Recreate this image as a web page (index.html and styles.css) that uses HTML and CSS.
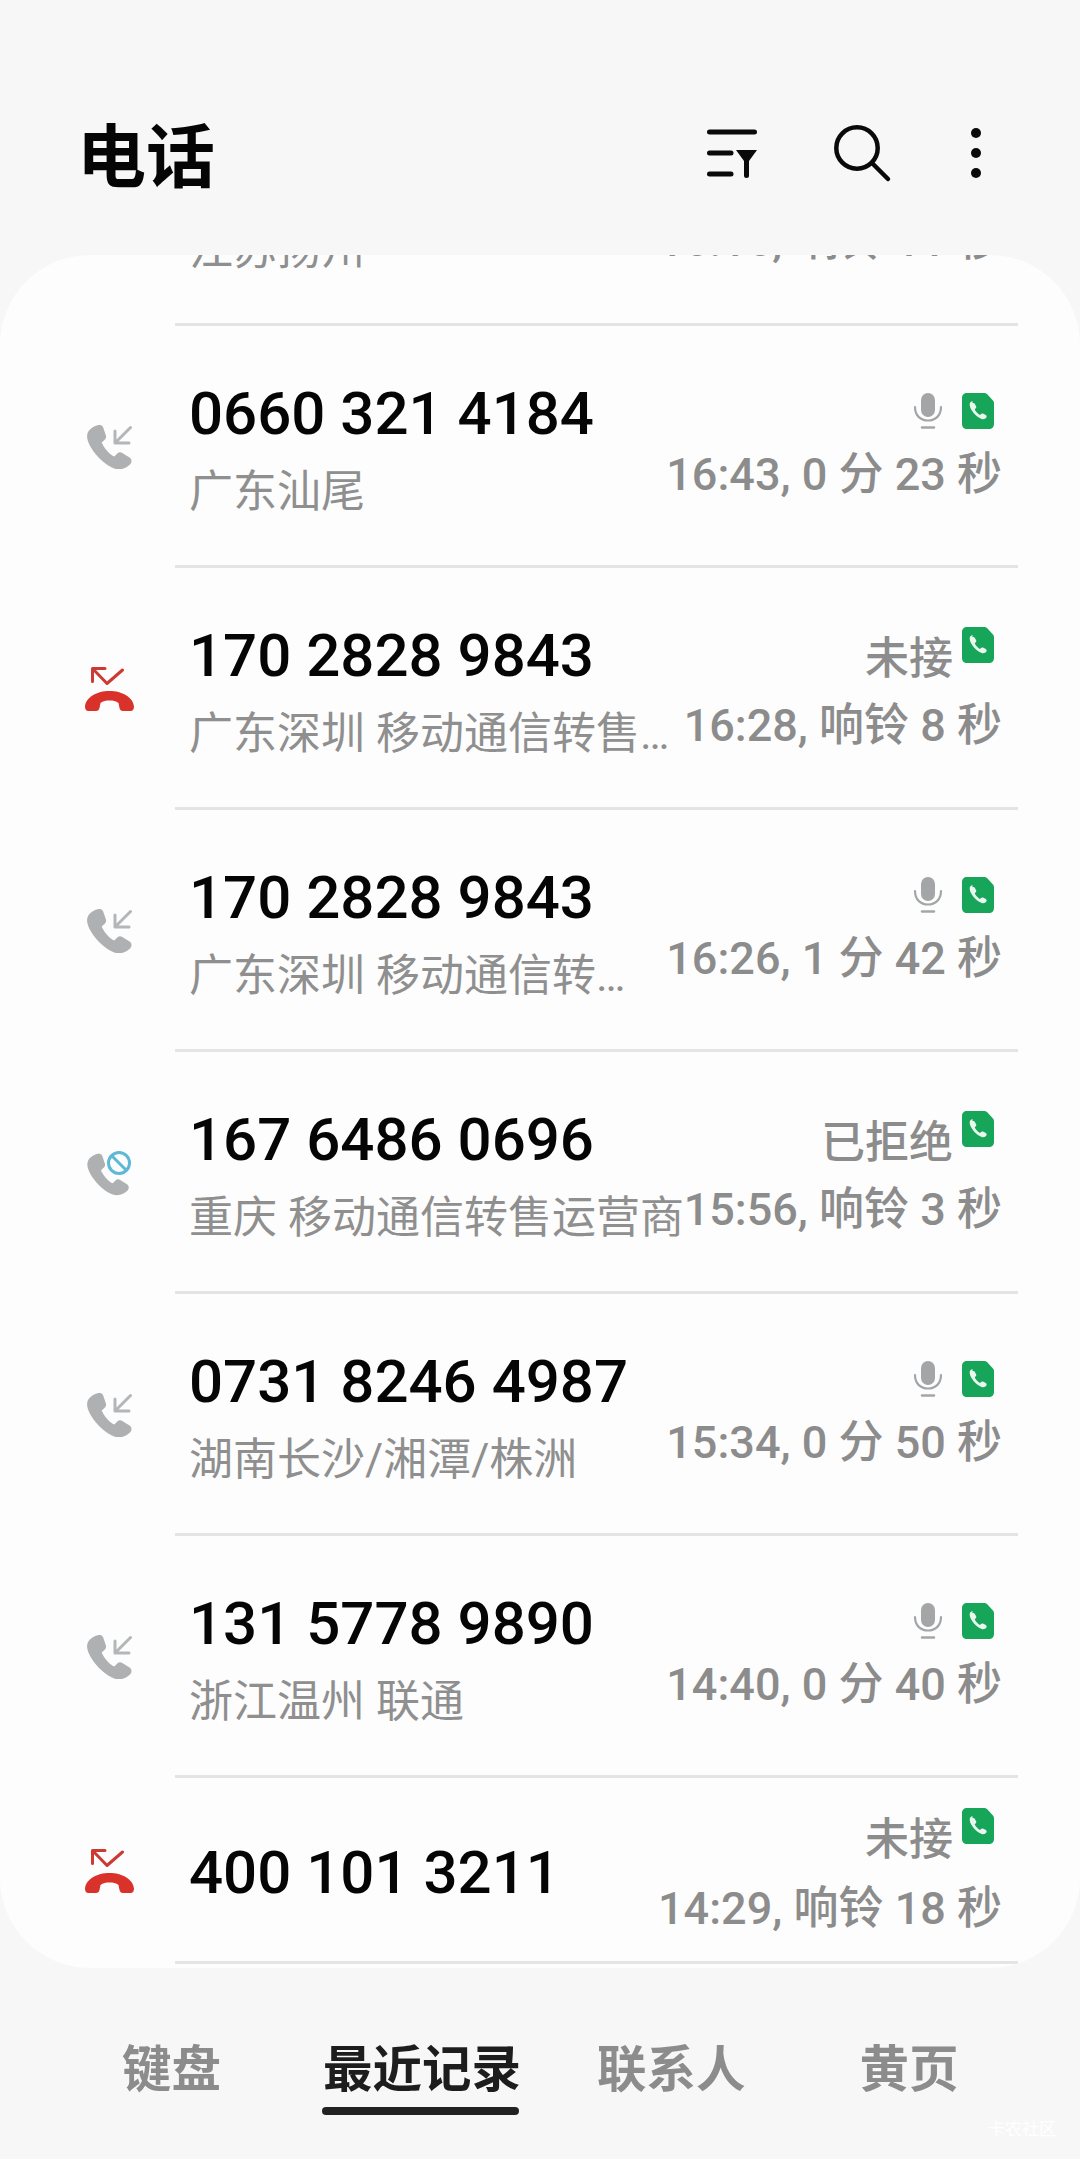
FILE: index.html
```html
<!DOCTYPE html>
<html lang="zh">
<head>
<meta charset="utf-8">
<title>电话</title>
<link rel="stylesheet" href="styles.css">
</head>
<body>
<svg class="defs" width="0" height="0" aria-hidden="true">
  <defs>
    <path id="handset" d="M12 1.500c-2.500.5-8.500 3-8.500 8.500 0 7 10 20 20 24 5 2 9.500 0 12.500-3 1.500-1.700 1-4-.5-5l-5.500-3.500c-1.500-.8-2.800-.5-3.800.5l-2.200 2.200c-3-.8-8-6.500-9.500-10.500l2.300-2.200c1.100-1 1.300-2.500.7-3.700L15.500 3C14.700 1.700 13.500 1.200 12 1.500z"/>
    <symbol id="incoming" viewBox="0 0 45 44">
      <use href="#handset" transform="translate(-4.600 -2) scale(1.330)" fill="#aeb0b2"/>
      <path d="M43.500 2.500 28 18M28 6V18H42" fill="none" stroke="#b4b6b8" stroke-width="3" stroke-linecap="round" stroke-linejoin="round"/>
    </symbol>
    <symbol id="missed" viewBox="0 0 49 44">
      <path d="M3.500 44C1 44 0 42 0 39.500 1 30 12 24 24.500 24S48 30 49 39.500C49 42 48 44 45.500 44H38C36 44 35 43 34.500 41L33.500 36C31 34 28 33.500 24.500 33.500S18 34 15.500 36L14.500 41C14 43 13 44 11 44Z" fill="#d9322b"/>
      <path d="M7.500 14.500V1.500H20M8 2 22 16.500 37.500 3" fill="none" stroke="#cc3a34" stroke-width="3" stroke-linecap="round" stroke-linejoin="round"/>
    </symbol>
    <symbol id="rejected" viewBox="0 0 45 45">
      <use href="#handset" transform="translate(-4 1) scale(1.240)" fill="#aeb0b2"/>
      <circle cx="32" cy="12" r="10.500" fill="#fdfdfd" stroke="#5db9d6" stroke-width="3"/>
      <path d="M24.500 4.500 39.500 19.500" stroke="#5db9d6" stroke-width="3"/>
    </symbol>
    <symbol id="mic" viewBox="0 0 30 36">
      <rect x="8" y="0" width="14" height="24" rx="7" fill="#a3a5a7"/>
      <path d="M2 14c0 9 6 13.500 13 13.500S28 23 28 14" fill="none" stroke="#a3a5a7" stroke-width="2.200" stroke-linecap="round"/>
      <path d="M9 34.500H21" stroke="#a3a5a7" stroke-width="2.400" stroke-linecap="round"/>
    </symbol>
    <symbol id="badge" viewBox="0 0 32 36">
      <path d="M5 0H22c1.500 0 2.500.5 3.500 1.500L30.500 7c1 1 1.500 2 1.500 3.500V31c0 3-2 5-5 5H5c-3 0-5-2-5-5V5C0 2 2 0 5 0z" fill="#17a659"/>
      <path d="M10.500 8c-1.500.3-3 1.500-2.800 4 .4 5 6.500 12 12 14 2 .7 4-.3 4.800-1.800.4-.8 0-1.700-.7-2.100l-2.800-1.500c-.8-.4-1.500-.2-2 .3l-1 1.100c-2-1-4.500-3.700-5.300-5.800l1.100-1c.5-.5.700-1.200.3-2l-1.500-2.700c-.4-.7-1.200-.7-2.100-.5z" fill="#e9f7ef"/>
    </symbol>
  </defs>
</svg>

<div class="screen">
  <header class="appbar">
    <h1 class="title">电话</h1>
    <div class="actions">
      <svg class="act act-filter" viewBox="0 -2 50 50"><path d="M2.500 2H47.500M2.500 23H24M2.500 44H24" fill="none" stroke="#0a0a0a" stroke-width="5" stroke-linecap="round"/><path d="M29 20H50L42 31H37z" fill="#0a0a0a"/><path d="M39.500 28V45.500" stroke="#0a0a0a" stroke-width="5" stroke-linecap="round"/></svg>
      <svg class="act act-search" viewBox="0 0 56 56"><circle cx="23" cy="23" r="20.700" fill="none" stroke="#0a0a0a" stroke-width="4.500"/><path d="M38 38 54 54" stroke="#0a0a0a" stroke-width="4.500" stroke-linecap="round"/></svg>
      <svg class="act act-more" viewBox="0 0 10 50"><circle cx="5" cy="5" r="5" fill="#0a0a0a"/><circle cx="5" cy="25" r="5" fill="#0a0a0a"/><circle cx="5" cy="45" r="5" fill="#0a0a0a"/></svg>
    </div>
  </header>

  <main class="list">
    <div class="peek">
      <div class="peek-inner">
        <span class="sub">江苏扬州</span>
        <span class="meta">16:16, 响铃 11 秒</span>
      </div>
    </div>

    <article class="row">
      <svg class="call-icon incoming"><use href="#incoming"/></svg>
      <div class="info"><div class="num">0660 321 4184</div><div class="sub">广东汕尾</div></div>
      <div class="side"><div class="top"><svg class="mic"><use href="#mic"/></svg><svg class="badge"><use href="#badge"/></svg></div><div class="meta">16:43, 0 分 23 秒</div></div>
    </article>

    <article class="row">
      <svg class="call-icon missed"><use href="#missed"/></svg>
      <div class="info"><div class="num">170 2828 9843</div><div class="sub cut">广东深圳 移动通信转售运营商</div></div>
      <div class="side side-status"><div class="top"><span class="status">未接</span><svg class="badge raised"><use href="#badge"/></svg></div><div class="meta">16:28, 响铃 8 秒</div></div>
    </article>

    <article class="row">
      <svg class="call-icon incoming"><use href="#incoming"/></svg>
      <div class="info"><div class="num">170 2828 9843</div><div class="sub cut short">广东深圳 移动通信转售运营商</div></div>
      <div class="side"><div class="top"><svg class="mic"><use href="#mic"/></svg><svg class="badge"><use href="#badge"/></svg></div><div class="meta">16:26, 1 分 42 秒</div></div>
    </article>

    <article class="row">
      <svg class="call-icon rejected"><use href="#rejected"/></svg>
      <div class="info"><div class="num">167 6486 0696</div><div class="sub">重庆 移动通信转售运营商</div></div>
      <div class="side side-status"><div class="top"><span class="status">已拒绝</span><svg class="badge raised"><use href="#badge"/></svg></div><div class="meta">15:56, 响铃 3 秒</div></div>
    </article>

    <article class="row">
      <svg class="call-icon incoming"><use href="#incoming"/></svg>
      <div class="info"><div class="num">0731 8246 4987</div><div class="sub">湖南长沙/湘潭/株洲</div></div>
      <div class="side"><div class="top"><svg class="mic"><use href="#mic"/></svg><svg class="badge"><use href="#badge"/></svg></div><div class="meta">15:34, 0 分 50 秒</div></div>
    </article>

    <article class="row">
      <svg class="call-icon incoming"><use href="#incoming"/></svg>
      <div class="info"><div class="num">131 5778 9890</div><div class="sub">浙江温州 联通</div></div>
      <div class="side"><div class="top"><svg class="mic"><use href="#mic"/></svg><svg class="badge"><use href="#badge"/></svg></div><div class="meta">14:40, 0 分 40 秒</div></div>
    </article>

    <article class="row row-single">
      <svg class="call-icon missed"><use href="#missed"/></svg>
      <div class="info"><div class="num">400 101 3211</div></div>
      <div class="side side-single"><div class="top"><span class="status">未接</span><svg class="badge raised"><use href="#badge"/></svg></div><div class="meta">14:29, 响铃 18 秒</div></div>
    </article>
  </main>

  <nav class="tabs">
    <span class="tab">键盘</span>
    <span class="tab t2 active">最近记录</span>
    <span class="tab t3">联系人</span>
    <span class="tab t4">黄页</span>
  </nav>
  <span class="watermark">卡农社区</span>
</div>
</body>
</html>
```

FILE: styles.css
```css
* { box-sizing: border-box; margin: 0; padding: 0; }
html, body { width: 1080px; height: 2159px; overflow: hidden; }
body { background: #f7f7f7; font-family: "Roboto", "Noto Sans CJK SC", sans-serif; }
.defs { position: absolute; }
.screen { position: relative; width: 1080px; height: 2159px; display: flex; flex-direction: column; }

.appbar { height: 255px; flex: none; padding: 0 99px 0 77px; display: flex; align-items: flex-start; justify-content: space-between; }
.title { font: 700 69px/76px "Noto Sans CJK SC", sans-serif; color: #050505; margin-top: 114px; }
.actions { display: flex; align-items: center; margin-top: 125px; }
.act { display: block; flex: none; overflow: visible; }
.act-filter { width: 50px; height: 50px; }
.act-search { width: 56px; height: 56px; margin-left: 77px; }
.act-more { width: 10px; height: 50px; margin-left: 81px; }

.list { flex: none; height: 1713px; background: #fdfdfd; border-radius: 90px; overflow: hidden; display: flex; flex-direction: column; }
.peek { height: 71px; flex: none; position: relative; }
.peek::after { content: ""; position: absolute; left: 175px; right: 62px; bottom: 0; height: 3px; background: #e4e4e4; }
.peek-inner { display: flex; justify-content: space-between; align-items: flex-start; margin-top: -39px; padding: 0 78px 0 189px; }
.peek .sub { margin-top: 9px; }
.peek .meta { margin-top: 0; }

.row { flex: none; height: 242px; position: relative; display: flex; align-items: center; }
.row::after { content: ""; position: absolute; left: 175px; right: 62px; bottom: 0; height: 3px; background: #e4e4e4; }
.row-single { height: 186px; }

.call-icon { flex: none; width: 45px; height: 44px; margin-left: 87px; }
.call-icon.missed { width: 49px; margin-left: 85px; }
.call-icon.rejected { height: 45px; }

.info { flex: 1 1 auto; min-width: 0; margin-left: 57px; padding-top: 3px; display: flex; flex-direction: column; }
.call-icon.missed + .info { margin-left: 55px; }
.num { font: 500 60px/68px "Roboto", sans-serif; color: #050505; white-space: nowrap; }
.sub { font: 400 44px/50px "Roboto", "Noto Sans CJK SC", sans-serif; color: #8f8f8f; white-space: nowrap; margin-top: 19px; }
.cut { width: 488px; overflow: hidden; text-overflow: ellipsis; }
.short { width: 446px; }

.side { position: absolute; right: 78px; top: 51px; display: flex; flex-direction: column; align-items: flex-end; }
.side-status { top: 53px; }
.side-single { top: 24px; }
.top { display: flex; align-items: center; height: 68px; margin-right: 8px; }
.mic { width: 30px; height: 36px; }
.badge { width: 32px; height: 36px; margin-left: 19px; }
.badge.raised { align-self: flex-start; margin-left: 9px; margin-top: 6px; }
.status { font: 500 44px/68px "Noto Sans CJK SC", sans-serif; color: #8c8c8c; }
.meta { font: 500 45px/50px "Roboto", "Noto Sans CJK SC", sans-serif; color: #8c8c8c; white-space: nowrap; margin-top: 5px; }
.side-status .meta { margin-top: 12px; }
.side-single .meta { margin-top: 14px; }

.tabs { flex: 1; display: flex; align-items: flex-start; padding-left: 122px; }
.tab { font: 700 49.500px/60px "Noto Sans CJK SC", sans-serif; color: #8c8c8c; white-space: nowrap; margin-top: 68px; height: 60px; position: relative; }
.t2 { margin-left: 102px; color: #1d1d1d; }
.t3 { margin-left: 76px; }
.t4 { margin-left: 114px; }
.t2.active::after { content: ""; position: absolute; left: -1px; right: 2px; top: 71px; height: 8px; border-radius: 4px; background: #222; }
.watermark { position: absolute; right: 24px; bottom: 21px; font: 400 17px/20px "Noto Sans CJK SC", sans-serif; color: #fff; }
```
